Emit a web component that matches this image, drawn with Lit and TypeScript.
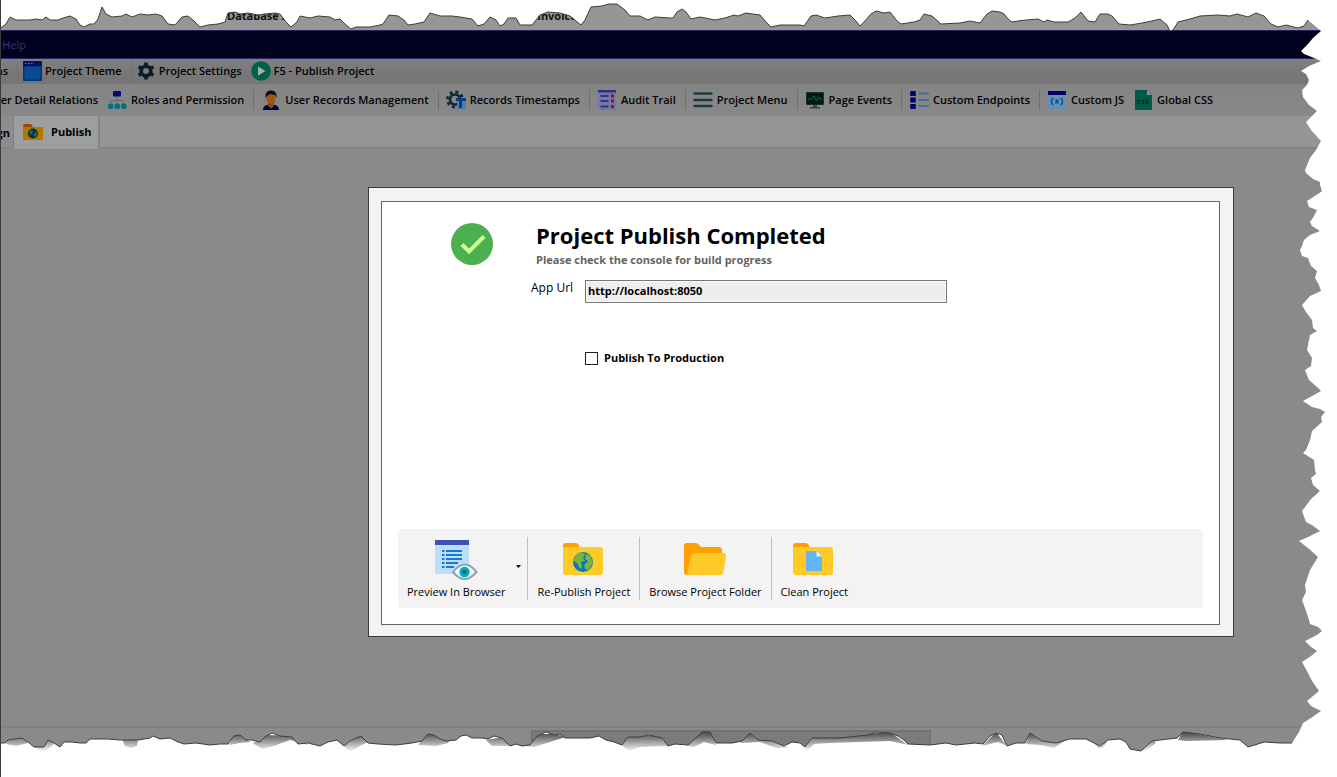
import { LitElement, html, css, svg, nothing } from "lit";
import { customElement, property, state } from "lit/decorators.js";

const drawings: Record<string, unknown> = {
  theme: svg`<rect x="1" y="0" width="19" height="20" rx="1" fill="#00337a"/><rect x="1" y="0" width="19" height="5" fill="#001560"/><path d="M3 2.500h1.500M6 2.500h1.500M9 2.500h1.500" stroke="#6878a8" stroke-width="1.200"/><rect x="2.500" y="6" width="16" height="12.500" fill="#0b4a92"/>`,
  gear: svg`<circle cx="10" cy="10" r="4.800" fill="none" stroke="#0a1c24" stroke-width="3.600"/><path d="M10 1.500v3M10 15.500v3M2.600 5.800l2.600 1.500M14.800 12.700l2.600 1.500M2.600 14.200l2.600-1.500M14.800 7.300l2.600-1.500" stroke="#0a1c24" stroke-width="3.600"/>`,
  play: svg`<circle cx="10" cy="10" r="9.800" fill="#00604a"/><path d="M7 5.500v9l7.500-4.500z" fill="#a5b5ad"/>`,
  roles: svg`<path d="M10 5v9M3.500 14v-3.500h13V14" fill="none" stroke="#607078"/><rect x="6" y="1" width="8" height="5.500" rx="1" fill="#06067a"/><g fill="#00727c"><rect x="1" y="13.500" width="5.500" height="5.500" rx="2"/><rect x="7.500" y="13.500" width="5.500" height="5.500" rx="2"/><rect x="14" y="13.500" width="5.500" height="5.500" rx="2"/></g>`,
  user: svg`<path d="M2 20c0-4 3-5.500 8-5.500s8 1.500 8 5.500z" fill="#000050"/><path d="M7 12h6v4l-3 2.500-3-2.500z" fill="#8a4a08"/><ellipse cx="10" cy="8.500" rx="4.500" ry="5.500" fill="#9a5b10"/><path d="M4.500 8C4 3 6 .5 10 .5S16 3 15.500 8l-1.500-3-5-1-3 2z" fill="#101014"/>`,
  stamps: svg`<circle cx="9" cy="9.500" r="5" fill="none" stroke="#0a2830" stroke-width="2.600"/><circle cx="9" cy="9.500" r="7.600" fill="none" stroke="#0a2830" stroke-width="2.800" stroke-dasharray="3 3"/><rect x="11" y="10" width="9" height="9" fill="#4a80a8"/><path d="M10 8h10v3h-4v7h-3v-7h-3z" fill="#073a88"/>`,
  audit: svg`<rect x="1" y="0" width="18" height="20" fill="#7878a4"/><rect x="1" y="0" width="18" height="2.500" fill="#28347c"/><path d="M3.500 6h8M3.500 11h8M3.500 16.500h8" stroke="#2b377c" stroke-width="1.800"/><path d="M14 6h3M14 11h3M14 16.500h3" stroke="#8a1140" stroke-width="2.800"/>`,
  menu: svg`<path d="M1.500 3.500h17M1.500 10h17M1.500 16h17" stroke="#1f3842" stroke-width="2.400" stroke-linecap="round"/>`,
  monitor: svg`<rect x="1" y="2" width="18" height="13" rx="1" fill="#1c2c30"/><rect x="2" y="3" width="16" height="11" fill="#001c10"/><path d="M3 9h4l2-3 2.500 5 2-4 1.500 2h2" fill="none" stroke="#13693c"/><path d="M8 15h4v2h3v1.500H5V17h3z" fill="#34454c"/>`,
  endpoints: svg`<path d="M4 1v18" stroke="#02026a" stroke-width="5.500" stroke-dasharray="5 1.500"/><path d="M10.500 3.500h9M10.500 10h9M10.500 16h9" stroke="#3f7097" stroke-width="2.200" stroke-linecap="round"/>`,
  js: svg`<rect x="1" y="1" width="18" height="18" fill="#6590b4"/><rect x="1" y="1" width="18" height="4" fill="#00006c"/><path d="M6 8q-3 3.500 0 7M14 8q3 3.500 0 7M8.500 9.500l3 4M11.500 9.500l-3 4" fill="none" stroke="#0b4c96" stroke-width="1.500"/>`,
  css: svg`<path d="M2 0h12l5 5v16H2z" fill="#005a48"/><path d="M14 0v5h5z" fill="#82958c"/><path d="M7 10.500H5v3h2M11 10.500H9V12h2v1.500H9M15 10.500h-2V12h2v1.500h-2" fill="none" stroke="#00281e"/>`,
  folderDark: svg`<path d="M0 4q0-2 2-2h6l2 3h10v12H0z" fill="#a04800"/><path d="M0 5h19q1 0 1 1v11q0 1-1 1H1q-1 0-1-1z" fill="#ae7a00"/><circle cx="10" cy="11.500" r="5" fill="#00305e"/><path d="M7 8l3 1-1 3-2 1zM11 12l3-3v4l-3 2z" fill="#2d6c1e"/>`,
  done: svg`<circle cx="21" cy="21" r="21" fill="#4caf50"/><path d="M11 21.500l7 7L33 13.500" fill="none" stroke="#ccff90" stroke-width="4"/>`,
  preview: svg`<path d="M1 5h34v29H1z" fill="#bbdefb"/><path d="M1 0h34v5H1z" fill="#3f51b5"/><path d="M8 11h2.500M8 15h2.500M8 19h2.500M8 23h2.500M8 27h2.500M12 11h16M12 15h16M12 19h16M12 23h12M12 27h8" stroke="#1976d2" stroke-width="2"/><path d="M19 32q12-15 23.500 0q-12 14-23.500 0z" fill="#f5f8f9" stroke="#90a4ae" stroke-width="2"/><circle cx="30.500" cy="32" r="5.200" fill="#00acc1"/><circle cx="30.500" cy="32" r="2" fill="#006064"/>`,
  globe: svg`<path d="M1 6q0-3 3-3h10q1.500 0 2.500 1.500L18 8h20v6H1z" fill="#ffa000"/><path d="M1 7h37q3 0 3 3v22q0 3-3 3H4q-3 0-3-3z" fill="#ffca28"/><circle cx="21" cy="22" r="10" fill="#0277bd"/><path d="M14 15l5-3 4 2-2 4 2 3-4 1 1 5-2 2-3-6-4-2zM24 14l4 1 2 5 1 3-4 6-3 1-2-4 2-3 2-2-3-2z" fill="#7cb342"/>`,
  open: svg`<path d="M1 6q0-3 3-3h9q1.500 0 2.500 1.500L18 7h18q3 0 3 3v20L4 35q-3 0-3-3z" fill="#ffa000"/><path d="M11 13h30q2.500 0 2 3l-2.500 16q-.5 3-3 3H4l4-19q.5-3 3-3z" fill="#ffca28"/>`,
  clean: svg`<path d="M1 6q0-3 3-3h10q1.500 0 2.500 1.500L18 8h20v6H1z" fill="#ffa000"/><path d="M1 7h37q3 0 3 3v22q0 3-3 3H4q-3 0-3-3z" fill="#ffca28"/><path d="M14 11h10.500L30 16.500V31H14z" fill="#64b5f6"/><path d="M24.500 11v5.500H30z" fill="#e1f5fe"/>`,
};

const TOP =
  "0,28 2,27 6,24 10,17 16,20 22,20 30,20 36,19 42,20 46,17 50,20 58,20 63,18 70,16 76,19 80,25 84,27 90,24 94,24 98,19 100,13 102,7 106,14 112,17 122,16 126,14 132,17 140,14 148,15 156,14 162,16 168,24 175,25 182,17 188,16 194,21 200,27 208,25 218,24 225,22 228,13 235,12 240,14 248,13 258,15 265,14 275,13 280,14 286,22 291,27 297,22 300,16 310,18 318,16 330,17 335,20 340,19 346,25 351,29 356,27 370,27 380,25 383,24 389,15 398,16 404,20 408,25 415,24 424,22 430,13 440,16 452,16 460,17 472,19 478,26 484,24 490,17 496,20 500,26 504,24 508,18 516,18 520,25 532,25 540,15 548,12 560,13 570,16 576,21 581,25 585,20 591,7 602,6 609,4 617,4 625,10 630,16 640,16 648,20 655,17 670,18 673,18 677,12 682,9 686,12 691,19 700,17 715,20 725,18 734,15 738,16 746,13 760,15 766,22 771,27 780,25 800,25 804,26 811,16 816,15 825,18 838,16 850,15 856,21 860,26 864,22 871,14 876,11 884,13 890,12 897,21 901,24 914,22 920,20 924,14 932,16 941,24 960,23 970,21 980,23 987,14 992,11 1000,12 1004,14 1009,20 1012,22 1018,21 1026,20 1038,19 1044,22 1047,20 1054,22 1068,22 1075,18 1081,12 1088,21 1095,22 1100,14 1108,14 1112,16 1119,24 1130,25 1142,23 1152,21 1160,19 1167,25 1170,31 1173,30 1178,22 1190,19 1200,16 1218,15 1230,16 1237,14 1248,17 1256,13 1264,16 1271,24 1278,27 1286,25 1298,28 1304,26 1308,20";
const RIGHT =
  "1321,31 1313,38 1308,44 1301,51 1304,54 1314,58 1321,61 1309,66 1301,71 1306,74 1309,80 1307,85 1302,90 1303,97 1309,105 1317,111 1306,122 1311,130 1321,141 1316,150 1310,158 1305,170 1306,173 1313,179 1320,182 1320,185 1322,191 1318,194 1307,201 1309,207 1317,210 1314,216 1310,222 1312,226 1320,231 1310,235 1304,240 1302,246 1300,250 1302,256 1308,258 1311,266 1317,271 1315,278 1319,285 1321,291 1310,296 1302,305 1306,312 1312,320 1313,328 1317,331 1310,335 1307,350 1312,358 1311,366 1305,370 1309,380 1317,387 1321,391 1312,396 1303,401 1312,407 1320,409 1325,412 1321,417 1322,422 1312,431 1310,440 1306,450 1303,453 1314,460 1315,470 1316,474 1311,478 1313,485 1320,491 1311,499 1302,511 1306,522 1312,525 1320,531 1308,537 1299,541 1308,548 1318,557 1310,570 1305,585 1306,592 1302,600 1306,611 1309,620 1310,624 1318,627 1322,631 1317,635 1305,641 1310,646 1317,651 1311,656 1302,662 1308,673 1312,681 1319,691 1307,701 1311,706 1321,711 1311,718 1303,723 1299,732 1292,743";
const BOTTOM =
  "0,743 5,743 8,740 14,739 22,738 28,742 34,747 44,747 48,740 54,743 60,747 64,742 72,742 80,743 86,743 90,739 98,739 108,739 120,740 138,740 150,738 153,736 160,739 170,738 178,742 184,744 196,743 210,745 220,744 228,744 234,736 240,735 246,740 252,740 260,742 266,736 272,733 280,736 292,737 298,744 308,743 320,746 328,742 337,740 344,746 350,741 361,736 368,743 378,744 396,745 412,743 422,741 428,734 434,735 440,739 446,741 456,740 461,736 466,735 472,738 482,738 488,739 494,736 502,738 510,746 516,744 522,746 530,745 537,736 546,732 554,735 560,734 565,738 590,738 599,736 606,740 614,742 622,745 628,737 640,737 648,735 662,738 668,746 675,744 688,745 695,739 702,732 710,732 716,743 732,743 742,741 750,733 758,740 772,741 784,746 792,742 800,743 805,747 812,738 840,738 868,735 876,732 890,733 898,736 904,740 908,744 930,745 946,743 956,745 975,743 983,744 990,736 996,733 1002,735 1007,746 1016,743 1025,743 1030,733 1042,741 1056,743 1066,740 1070,739 1086,739 1094,743 1100,746 1108,740 1120,739 1126,742 1130,749 1141,751 1152,741 1160,740 1177,738 1183,732 1200,734 1220,738 1230,739 1240,740 1248,747 1258,744 1264,742 1280,743 1292,743";
const EDGES = [
  "8,738 24,738 28,743 16,746 6,744", "33,745 50,738 54,744 42,754", "122,739 138,740 137,746 131,748 125,746",
  "229,745 234,735 241,735 250,742 240,743", "253,743 266,735 295,736 308,745 290,740 274,746 262,749",
  "344,746 361,734 368,742 360,746 350,752", "418,745 428,732 450,740 448,743 436,746", "486,740 502,737 510,746 492,746",
  "526,746 537,734 555,734 566,737 550,742 534,747", "622,746 628,735 660,736 668,746 640,747 630,751",
  "686,746 702,731 712,732 716,745 704,742 694,747", "740,743 750,732 788,748 776,748 760,742",
  "804,749 812,738 890,732 908,745 890,741 830,743 814,744 808,750", "982,746 996,732 1007,746 998,742",
  "1026,744 1030,732 1066,740 1054,748 1040,745", "1094,743 1107,742 1102,748 1098,748",
  "1139,752 1154,740 1156,743 1144,752", "1178,740 1183,731 1228,740 1186,741",
];

const row1 = [
  { text: "ns", icon: "", sep: false },
  { text: "Project Theme", icon: "theme", sep: true },
  { text: "Project Settings", icon: "gear", sep: true },
  { text: "F5 - Publish Project", icon: "play", sep: false },
];
const row2 = [
  { text: "ter Detail Relations", icon: "", sep: false },
  { text: "Roles and Permission", icon: "roles", sep: false },
  { text: "User Records Management", icon: "user", sep: true },
  { text: "Records Timestamps", icon: "stamps", sep: true },
  { text: "Audit Trail", icon: "audit", sep: true },
  { text: "Project Menu", icon: "menu", sep: true },
  { text: "Page Events", icon: "monitor", sep: true },
  { text: "Custom Endpoints", icon: "endpoints", sep: true },
  { text: "Custom JS", icon: "js", sep: true },
  { text: "Global CSS", icon: "css", sep: false },
];

@customElement("tool-row")
class ToolRow extends LitElement {
  @property({ attribute: false }) items: typeof row1 = [];

  static styles = css`
    :host { display: flex; align-items: center; white-space: nowrap; overflow: hidden; }
    button {
      display: flex; align-items: center; gap: var(--icon-gap, 4px); flex: none;
      border: 0; padding: 0; background: none; color: #020206;
      font: 600 11px/20px "Open Sans", "Noto Sans", sans-serif;
    }
    .lead { width: var(--lead, 97px); justify-content: flex-end; }
    .gap { flex: none; width: 9px; }
    .sep { flex: none; width: 1px; height: 20px; margin: 0 var(--sep-gap, 7px) 0 9px; background: #707070; }
    svg { width: 20px; height: 20px; }
  `;

  render() {
    return this.items.map(
      (item, i) => html`${item.sep ? html`<span class="sep"></span>` : i ? html`<span class="gap"></span>` : nothing}
        <button type="button" class=${i ? "tool" : "lead"}>
          ${item.icon ? html`<svg viewBox="0 0 20 20" aria-hidden="true">${drawings[item.icon]}</svg>` : nothing}
          <span>${item.text}</span>
        </button>`
    );
  }
}

@customElement("publish-dialog")
class PublishDialog extends LitElement {
  @state() production = false;

  static styles = css`
    :host {
      display: flex; border: 1px solid #3c3c3c; background: #f3f3f3;
      padding: 13px 13px 11px 12px; color: #000;
      font: 12px/16px "Open Sans", "Noto Sans", sans-serif;
    }
    .panel {
      flex: 1; min-width: 0; display: flex; flex-direction: column; justify-content: space-between;
      min-height: 424px; box-sizing: border-box; padding: 20px 16px 16px;
      border: 1px solid #646464; background: #fff;
    }
    .content { display: grid; grid-template-columns: 133px 54px minmax(0, 362px); }
    .badge { grid-row: 1 / 3; width: 42px; height: 42px; justify-self: end; margin: 1px 38px 0 0; }
    .titles { grid-column: 2 / 4; padding-left: 5px; }
    h1 { margin: 0; font-size: 22px; line-height: 26px; font-weight: 700; white-space: nowrap; }
    p { margin: 4px 0 0; font-size: 11px; font-weight: 700; color: #646464; }
    .label { grid-column: 2; margin-top: 12px; }
    .url {
      grid-column: 3; height: 23px; box-sizing: border-box; margin-top: 12px; padding: 0 2px 2px;
      border: 1px solid #767676; background: #eee; box-shadow: inset 0 0 0 1px #fafafa;
      font: 700 11px/16px "Open Sans", "Noto Sans", sans-serif; color: #000; border-radius: 0;
    }
    .check { grid-column: 3; display: flex; align-items: center; gap: 6px; margin-top: 47px; font-size: 11px; font-weight: 700; }
    .check input {
      appearance: none; width: 13px; height: 13px; margin: 0; border: 1px solid #222; background: #fff;
    }
    .check input:checked { box-shadow: inset 0 0 0 2px #fff; background: #222; }
    .actions {
      display: flex; align-items: stretch; box-sizing: border-box; min-height: 78px; padding: 8px 0;
      border-radius: 4px; background: #f3f3f3;
    }
    button {
      display: flex; flex-direction: column; align-items: center; gap: 2px;
      border: 0; background: none; padding: 3px 9px 0; color: #000;
      font: 11px/16px "Open Sans", "Noto Sans", sans-serif; white-space: nowrap;
    }
    button svg { width: 44px; height: 42px; }
    .more { padding: 28px 6px 0 2px; }
    .more svg { width: 5px; height: 3px; }
    .divide { width: 1px; background: #c0c0c0; }
  `;

  private action(icon: string, text: string) {
    return html`<button type="button"><svg viewBox="0 0 44 42" aria-hidden="true">${drawings[icon]}</svg><span>${text}</span></button>`;
  }

  render() {
    return html`
      <section class="panel" aria-labelledby="title">
        <div class="content">
          <svg class="badge" viewBox="0 0 42 42" aria-hidden="true">${drawings.done}</svg>
          <div class="titles">
            <h1 id="title">Project Publish Completed</h1>
            <p>Please check the console for build progress</p>
          </div>
          <label class="label" for="url">App Url</label>
          <input class="url" id="url" type="text" readonly value="http://localhost:8050" />
          <label class="check">
            <input type="checkbox" .checked=${this.production}
              @change=${(e: Event) => (this.production = (e.target as HTMLInputElement).checked)} />
            Publish To Production
          </label>
        </div>
        <div class="actions">
          ${this.action("preview", "Preview In Browser")}
          <button type="button" class="more" aria-label="More preview options">
            <svg viewBox="0 0 5 3" aria-hidden="true"><path d="M0 0h5L2.500 3z" /></svg>
          </button>
          <span class="divide"></span>
          ${this.action("globe", "Re-Publish Project")}
          <span class="divide"></span>
          ${this.action("open", "Browse Project Folder")}
          <span class="divide"></span>
          ${this.action("clean", "Clean Project")}
        </div>
      </section>
    `;
  }
}

@customElement("app-root")
class AppRoot extends LitElement {
  static styles = css`
    :host {
      display: flex; flex-direction: column; position: relative; min-height: 100vh; overflow: hidden;
      box-sizing: border-box; border-left: 1px solid #3c3c3c; background: #8a8a8a;
      font: 11px/16px "Open Sans", "Noto Sans", sans-serif;
    }
    .title { display: flex; height: 30px; box-sizing: border-box; padding: 8px 0 0 226px; gap: 248px; background: #969696; color: #111; font-weight: 700; white-space: nowrap; }
    .menu {
      display: flex; height: 27px; line-height: 27px; border: solid #2b2360; border-width: 1px 0; background: #00001f;
    }
    .menu a { width: 25px; display: flex; justify-content: flex-end; overflow: hidden; color: #3a3478; text-decoration: none; }
    .first { --lead: 7px; --icon-gap: 3px; --sep-gap: 4px; height: 24px; padding-bottom: 1px; background: linear-gradient(#808080, #767676 70%); }
    .second { height: 32px; background: linear-gradient(#848484, #888); }
    .tabs { display: flex; height: 31px; border-bottom: 2px solid #858585; background: #959595; }
    .tab {
      display: flex; align-items: center; box-sizing: border-box; border: 0; padding: 0 0 4px;
      font: 700 11px/16px "Open Sans", "Noto Sans", sans-serif; color: #000; background: #8d8d8d;
    }
    .cut { width: 13px; padding: 3px 3px 0 0; justify-content: flex-end; border-right: 1px solid #808080; }
    .current { height: 33px; gap: 8px; padding: 0 6px 2px 9px; background: #9e9e9e; border-right: 2px solid #858585; }
    .current svg { width: 20px; height: 20px; }
    .work { flex: 1; padding: 38px 103px 0 367px; }
    .status { display: flex; flex: none; height: 47px; border-top: 2px solid #808080; padding: 2px 0 0 530px; }
    .thumb { width: 400px; height: 20px; box-sizing: border-box; border: 2px solid #727272; background: #7b7b7b; }
    .torn { position: absolute; top: 0; left: -1px; width: calc(100% + 1px); height: 100%; pointer-events: none; }
    .paper { fill: #fff; }
    .line { fill: none; stroke: #3c3c3c; vector-effect: non-scaling-stroke; }
  `;

  render() {
    return html`
      <header class="title"><span>Database A</span><span>Invoice</span></header>
      <nav class="menu"><a href="#help">Help</a></nav>
      <tool-row class="first" .items=${row1}></tool-row>
      <tool-row class="second" .items=${row2}></tool-row>
      <div class="tabs" role="tablist">
        <button type="button" class="tab cut" role="tab">gn</button>
        <button type="button" class="tab current" role="tab" aria-selected="true">
          <svg viewBox="0 0 20 20" aria-hidden="true">${drawings.folderDark}</svg>Publish
        </button>
      </div>
      <main class="work"><publish-dialog></publish-dialog></main>
      <footer class="status"><span class="thumb"></span></footer>
      <svg class="torn" viewBox="0 0 1337 777" preserveAspectRatio="none" aria-hidden="true">
        <defs>
          <linearGradient id="fade" gradientUnits="userSpaceOnUse" x1="0" y1="733" x2="0" y2="752">
            <stop offset="0" stop-color="#505050" /><stop offset="0.500" stop-color="#a4a4a4" /><stop offset="1" stop-color="#fff" />
          </linearGradient>
          <clipPath id="below"><polygon points="${BOTTOM} 1337,743 1337,777 0,777" /></clipPath>
        </defs>
        <polygon class="paper" points="0,0 ${TOP} 1321,31 1337,31 1337,0" />
        <polygon class="paper" points="1337,30 ${RIGHT} 1292,777 1337,777" />
        <polygon class="paper" points="${BOTTOM} 1337,743 1337,777 0,777" />
        <g clip-path="url(#below)" fill="url(#fade)">
          ${EDGES.map((points) => svg`<polygon points=${points} />`)}
        </g>
        <polyline class="line" points="${TOP}" />
        <polyline class="line" points="${BOTTOM}" />
      </svg>
    `;
  }
}
